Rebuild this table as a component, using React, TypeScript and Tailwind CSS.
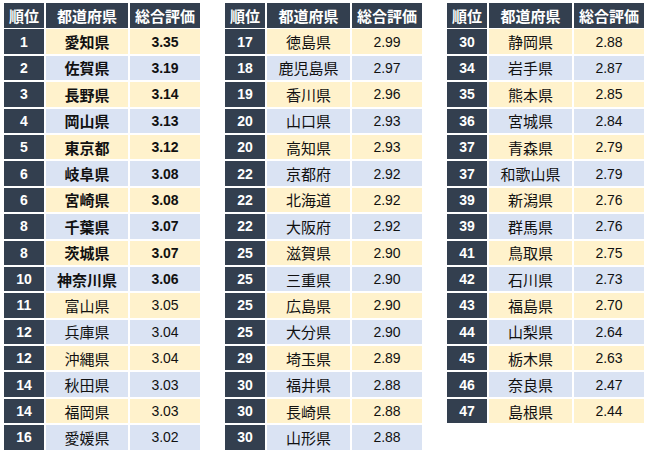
import React from "react";

type Row = [string, string, string];

const t1: Row[] = [
  ["1", "愛知県", "3.35"],
  ["2", "佐賀県", "3.19"],
  ["3", "長野県", "3.14"],
  ["4", "岡山県", "3.13"],
  ["5", "東京都", "3.12"],
  ["6", "岐阜県", "3.08"],
  ["6", "宮崎県", "3.08"],
  ["8", "千葉県", "3.07"],
  ["8", "茨城県", "3.07"],
  ["10", "神奈川県", "3.06"],
  ["11", "富山県", "3.05"],
  ["12", "兵庫県", "3.04"],
  ["12", "沖縄県", "3.04"],
  ["14", "秋田県", "3.03"],
  ["14", "福岡県", "3.03"],
  ["16", "愛媛県", "3.02"],
];

const t2: Row[] = [
  ["17", "徳島県", "2.99"],
  ["18", "鹿児島県", "2.97"],
  ["19", "香川県", "2.96"],
  ["20", "山口県", "2.93"],
  ["20", "高知県", "2.93"],
  ["22", "京都府", "2.92"],
  ["22", "北海道", "2.92"],
  ["22", "大阪府", "2.92"],
  ["25", "滋賀県", "2.90"],
  ["25", "三重県", "2.90"],
  ["25", "広島県", "2.90"],
  ["25", "大分県", "2.90"],
  ["29", "埼玉県", "2.89"],
  ["30", "福井県", "2.88"],
  ["30", "長崎県", "2.88"],
  ["30", "山形県", "2.88"],
];

const t3: Row[] = [
  ["30", "静岡県", "2.88"],
  ["34", "岩手県", "2.87"],
  ["35", "熊本県", "2.85"],
  ["36", "宮城県", "2.84"],
  ["37", "青森県", "2.79"],
  ["37", "和歌山県", "2.79"],
  ["39", "新潟県", "2.76"],
  ["39", "群馬県", "2.76"],
  ["41", "鳥取県", "2.75"],
  ["42", "石川県", "2.73"],
  ["43", "福島県", "2.70"],
  ["44", "山梨県", "2.64"],
  ["45", "栃木県", "2.63"],
  ["46", "奈良県", "2.47"],
  ["47", "島根県", "2.44"],
];

const headCls =
  "h-[25px] bg-[#333f4f] text-white font-bold text-[15px] flex items-center justify-center leading-none font-['Noto_Sans_CJK_JP','Noto_Sans',sans-serif]";
const rankCls =
  "bg-[#333f4f] text-white font-bold text-[14px] flex items-center justify-center leading-none font-['Liberation_Sans',Arial,sans-serif]";

function Table({ rows, boldCount, wide }: { rows: Row[]; boldCount: number; wide: boolean }) {
  return (
    <div
      className={
        wide
          ? "grid grid-cols-[40px_83px_70px] auto-rows-[24.4px] gap-[2px] bg-white"
          : "grid grid-cols-[40px_82px_70px] auto-rows-[24.4px] gap-[2px] bg-white"
      }
    >
      <div className={headCls}>順位</div>
      <div className={headCls}>都道府県</div>
      <div className={headCls}>総合評価</div>
      {rows.map((r, i) => {
        const bold = i < boldCount;
        const bg = i % 2 === 0 ? "bg-[#fff2cc]" : "bg-[#dae3f3]";
        return (
          <React.Fragment key={i}>
            <div className={rankCls}>{r[0]}</div>
            <div
              className={`${bg} ${
                bold ? "font-bold" : "font-normal"
              } text-[#111111] text-[15px] flex items-center justify-center leading-none font-['Noto_Sans_CJK_JP','Noto_Sans',sans-serif]`}
            >
              {r[1]}
            </div>
            <div
              className={`${bg} ${
                bold ? "font-bold" : "font-normal"
              } text-[#111111] text-[14px] flex items-center justify-center leading-none font-['Liberation_Sans',Arial,sans-serif]`}
            >
              {r[2]}
            </div>
          </React.Fragment>
        );
      })}
    </div>
  );
}

export default function App() {
  return (
    <div className="w-[650px] h-[454px] bg-white flex items-start gap-[25px] pl-[4px] pt-[3px]">
      <Table rows={t1} boldCount={10} wide={false} />
      <Table rows={t2} boldCount={0} wide={true} />
      <Table rows={t3} boldCount={0} wide={true} />
    </div>
  );
}
